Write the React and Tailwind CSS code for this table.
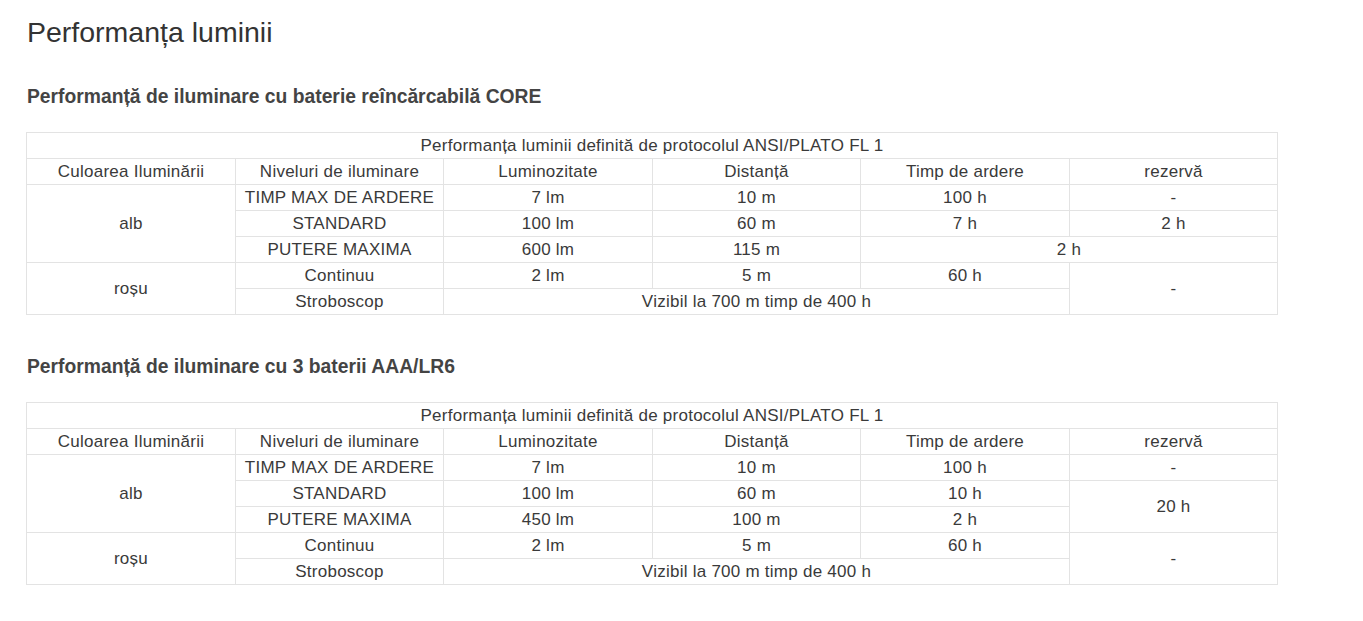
const cell = 'border border-[#e3e3e3] h-[26px] p-0 text-center align-middle font-normal';

function PerfTable({ rows }) {
  return (
    <table className="w-[1251px] table-fixed border-collapse text-[17px] leading-[20px] tracking-[0.25px] text-[#3a3a3a]">
      <colgroup>
        <col className="w-[209px]" />
        <col className="w-[208px]" />
        <col className="w-[209px]" />
        <col className="w-[208px]" />
        <col className="w-[209px]" />
        <col className="w-[208px]" />
      </colgroup>
      <tbody>
        <tr>
          <td colSpan={6} className={cell}>Performanța luminii definită de protocolul ANSI/PLATO FL 1</td>
        </tr>
        <tr>
          <td className={cell}>Culoarea Iluminării</td>
          <td className={cell}>Niveluri de iluminare</td>
          <td className={cell}>Luminozitate</td>
          <td className={cell}>Distanță</td>
          <td className={cell}>Timp de ardere</td>
          <td className={cell}>rezervă</td>
        </tr>
        {rows}
      </tbody>
    </table>
  );
}

export default function App() {
  const c = cell;
  return (
    <div className="min-h-[621px] bg-white px-[26px] pt-[12px] font-['Liberation_Sans',Arial,sans-serif]">
      <h1 className="ml-px text-[28.5px] leading-[40px] font-light text-[#333]">Performanța luminii</h1>

      <h2 className="mt-[33px] ml-px text-[19.3px] leading-[24px] font-bold text-[#444]">
        Performanță de iluminare cu baterie reîncărcabilă CORE
      </h2>
      <div className="mt-[23px]">
        <PerfTable
          rows={
            <>
              <tr>
                <td rowSpan={3} className={c}>alb</td>
                <td className={c}>TIMP MAX DE ARDERE</td>
                <td className={c}>7 lm</td>
                <td className={c}>10 m</td>
                <td className={c}>100 h</td>
                <td className={c}>-</td>
              </tr>
              <tr>
                <td className={c}>STANDARD</td>
                <td className={c}>100 lm</td>
                <td className={c}>60 m</td>
                <td className={c}>7 h</td>
                <td className={c}>2 h</td>
              </tr>
              <tr>
                <td className={c}>PUTERE MAXIMA</td>
                <td className={c}>600 lm</td>
                <td className={c}>115 m</td>
                <td colSpan={2} className={c}>2 h</td>
              </tr>
              <tr>
                <td rowSpan={2} className={c}>roșu</td>
                <td className={c}>Continuu</td>
                <td className={c}>2 lm</td>
                <td className={c}>5 m</td>
                <td className={c}>60 h</td>
                <td rowSpan={2} className={c}>-</td>
              </tr>
              <tr>
                <td className={c}>Stroboscop</td>
                <td colSpan={3} className={c}>Vizibil la 700 m timp de 400 h</td>
              </tr>
            </>
          }
        />
      </div>

      <h2 className="mt-[40px] ml-px text-[19.3px] leading-[24px] font-bold text-[#444]">
        Performanță de iluminare cu 3 baterii AAA/LR6
      </h2>
      <div className="mt-[23px]">
        <PerfTable
          rows={
            <>
              <tr>
                <td rowSpan={3} className={c}>alb</td>
                <td className={c}>TIMP MAX DE ARDERE</td>
                <td className={c}>7 lm</td>
                <td className={c}>10 m</td>
                <td className={c}>100 h</td>
                <td className={c}>-</td>
              </tr>
              <tr>
                <td className={c}>STANDARD</td>
                <td className={c}>100 lm</td>
                <td className={c}>60 m</td>
                <td className={c}>10 h</td>
                <td rowSpan={2} className={c}>20 h</td>
              </tr>
              <tr>
                <td className={c}>PUTERE MAXIMA</td>
                <td className={c}>450 lm</td>
                <td className={c}>100 m</td>
                <td className={c}>2 h</td>
              </tr>
              <tr>
                <td rowSpan={2} className={c}>roșu</td>
                <td className={c}>Continuu</td>
                <td className={c}>2 lm</td>
                <td className={c}>5 m</td>
                <td className={c}>60 h</td>
                <td rowSpan={2} className={c}>-</td>
              </tr>
              <tr>
                <td className={c}>Stroboscop</td>
                <td colSpan={3} className={c}>Vizibil la 700 m timp de 400 h</td>
              </tr>
            </>
          }
        />
      </div>
    </div>
  );
}
